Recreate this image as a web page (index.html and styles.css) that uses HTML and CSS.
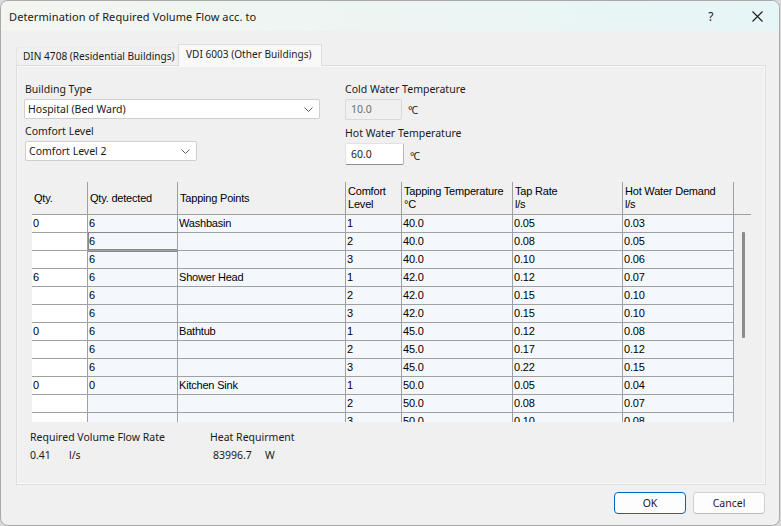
FILE: index.html
```html
<!DOCTYPE html>
<html lang="en">
<head>
    <meta charset="UTF-8">
    <title>Determination of Required Volume Flow</title>
    <link rel="stylesheet" href="styles.css">
</head>
<body>
    <div class="window">
        <div class="titlebar">
            <span class="title">Determination of Required Volume Flow acc. to</span>
            <span class="help">?</span>
            <span class="close">
                <svg width="11" height="11" viewBox="0 0 11 11"><path d="M0.5 0.5 L10.5 10.5 M10.5 0.5 L0.5 10.5" stroke="#1c1c1c" stroke-width="1.1" fill="none"/></svg>
            </span>
        </div>

        <div class="tabs">
            <div class="tab">DIN 4708 (Residential Buildings)</div>
            <div class="tab active">VDI 6003 (Other Buildings)</div>
        </div>

        <div class="panel">
            <div class="form">
                <div class="col col-left">
                    <div class="label">Building Type</div>
                    <div class="combo combo-wide">
                        <span>Hospital (Bed Ward)</span>
                        <svg width="9" height="5" viewBox="0 0 9 5"><path d="M0.5 0.5 L4.5 4.5 L8.5 0.5" stroke="#606060" fill="none"/></svg>
                    </div>
                    <div class="label label-second">Comfort Level</div>
                    <div class="combo combo-narrow">
                        <span>Comfort Level 2</span>
                        <svg width="9" height="5" viewBox="0 0 9 5"><path d="M0.5 0.5 L4.5 4.5 L8.5 0.5" stroke="#606060" fill="none"/></svg>
                    </div>
                </div>
                <div class="col col-right">
                    <div class="label">Cold Water Temperature</div>
                    <div class="temp">
                        <div class="input input-disabled">10.0</div>
                        <span class="unit">°C</span>
                    </div>
                    <div class="label label-third">Hot Water Temperature</div>
                    <div class="temp">
                        <div class="input input-hot">60.0</div>
                        <span class="unit unit-hot">°C</span>
                    </div>
                </div>
            </div>

            <div class="grid">
                <div class="grid-head">
                    <div class="hcell">Qty.</div>
                    <div class="hcell">Qty. detected</div>
                    <div class="hcell">Tapping Points</div>
                    <div class="hcell">Comfort<br>Level</div>
                    <div class="hcell">Tapping Temperature<br>°C</div>
                    <div class="hcell">Tap Rate<br>l/s</div>
                    <div class="hcell">Hot Water Demand<br>l/s</div>
                    <div class="hfill"></div>
                </div>
                <div class="grid-body">
                    <div class="rows">
                        <div class="row"><div class="cell qty">0</div><div class="cell">6</div><div class="cell">Washbasin</div><div class="cell">1</div><div class="cell">40.0</div><div class="cell">0.05</div><div class="cell">0.03</div></div>
                        <div class="row"><div class="cell qty"></div><div class="cell selected">6</div><div class="cell"></div><div class="cell">2</div><div class="cell">40.0</div><div class="cell">0.08</div><div class="cell">0.05</div></div>
                        <div class="row"><div class="cell qty"></div><div class="cell">6</div><div class="cell"></div><div class="cell">3</div><div class="cell">40.0</div><div class="cell">0.10</div><div class="cell">0.06</div></div>
                        <div class="row"><div class="cell qty">6</div><div class="cell">6</div><div class="cell">Shower Head</div><div class="cell">1</div><div class="cell">42.0</div><div class="cell">0.12</div><div class="cell">0.07</div></div>
                        <div class="row"><div class="cell qty"></div><div class="cell">6</div><div class="cell"></div><div class="cell">2</div><div class="cell">42.0</div><div class="cell">0.15</div><div class="cell">0.10</div></div>
                        <div class="row"><div class="cell qty"></div><div class="cell">6</div><div class="cell"></div><div class="cell">3</div><div class="cell">42.0</div><div class="cell">0.15</div><div class="cell">0.10</div></div>
                        <div class="row"><div class="cell qty">0</div><div class="cell">6</div><div class="cell">Bathtub</div><div class="cell">1</div><div class="cell">45.0</div><div class="cell">0.12</div><div class="cell">0.08</div></div>
                        <div class="row"><div class="cell qty"></div><div class="cell">6</div><div class="cell"></div><div class="cell">2</div><div class="cell">45.0</div><div class="cell">0.17</div><div class="cell">0.12</div></div>
                        <div class="row"><div class="cell qty"></div><div class="cell">6</div><div class="cell"></div><div class="cell">3</div><div class="cell">45.0</div><div class="cell">0.22</div><div class="cell">0.15</div></div>
                        <div class="row"><div class="cell qty">0</div><div class="cell">0</div><div class="cell">Kitchen Sink</div><div class="cell">1</div><div class="cell">50.0</div><div class="cell">0.05</div><div class="cell">0.04</div></div>
                        <div class="row"><div class="cell qty"></div><div class="cell"></div><div class="cell"></div><div class="cell">2</div><div class="cell">50.0</div><div class="cell">0.08</div><div class="cell">0.07</div></div>
                        <div class="row"><div class="cell qty"></div><div class="cell"></div><div class="cell"></div><div class="cell">3</div><div class="cell">50.0</div><div class="cell">0.10</div><div class="cell">0.08</div></div>
                    </div>
                    <div class="scrollbar"><div class="thumb"></div></div>
                </div>
            </div>

            <div class="results">
                <div class="result result-flow">
                    <div class="label">Required Volume Flow Rate</div>
                    <div class="value"><span class="num num-flow">0.41</span><span>l/s</span></div>
                </div>
                <div class="result result-heat">
                    <div class="label">Heat Requirment</div>
                    <div class="value"><span class="num num-heat">83996.7</span><span>W</span></div>
                </div>
            </div>
        </div>

        <div class="buttons">
            <button class="btn btn-primary">OK</button>
            <button class="btn">Cancel</button>
        </div>
    </div>
</body>
</html>
```

FILE: styles.css
```css
body {
    margin: 0;
    background-color: #d9d9d9;
    font-family: "Noto Sans", "Open Sans", sans-serif;
    font-size: 10.5px;
    color: #1a1a1a;
}

.window {
    width: 780px;
    height: 526px;
    box-sizing: border-box;
    border: 1px solid #a9a9a9;
    border-radius: 8px;
    background-color: #f0f0f0;
    overflow: hidden;
}

/* title bar */
.titlebar {
    display: flex;
    align-items: center;
    height: 30px;
    padding-left: 8px;
    background: linear-gradient(to right, #f4f5f1, #eef5f2 40%, #e6f5f7);
    font-size: 11px;
    letter-spacing: 0.1px;
}

.title {
    flex: 1;
}

.help {
    width: 24px;
    margin-right: 29px;
    text-align: center;
    font-size: 12px;
}

.close {
    display: flex;
    margin-right: 16px;
}

/* tabs */
.tabs {
    display: flex;
    align-items: flex-end;
    height: 21px;
    margin-top: 13px;
    padding-left: 15px;
    font-size: 10.1px;
}

.tab {
    width: 162px;
    height: 18px;
    box-sizing: border-box;
    line-height: 17px;
    padding-left: 6px;
    white-space: nowrap;
    overflow: hidden;
    border-left: 1px solid #e4e4e4;
    border-top: 1px solid #ececec;
}

.tab.active {
    position: relative;
    width: 144px;
    height: 22px;
    line-height: 18px;
    padding-left: 7px;
    background-color: #f9f9f9;
    border: 1px solid #dcdcdc;
    border-bottom: none;
    margin-bottom: -1px;
}

/* panel */
.panel {
    width: 750px;
    height: 420px;
    box-sizing: border-box;
    margin-left: 15px;
    padding: 15px 0 0 8px;
    border: 1px solid #dcdcdc;
    box-shadow: inset 0 0 0 1px #f9f9f9;
}

.form {
    display: flex;
    align-items: flex-start;
    gap: 25px;
    height: 82px;
}

.col {
    display: flex;
    flex-direction: column;
}

.col-left {
    width: 296px;
    margin-left: -1px;
}

.label {
    height: 16px;
    line-height: 16px;
    white-space: nowrap;
}

.col-left .label {
    padding-left: 1px;
}

.label-second {
    margin-top: 4px;
}

.label-third {
    margin-top: 5px;
}

.combo {
    display: flex;
    align-items: center;
    justify-content: space-between;
    height: 20px;
    box-sizing: border-box;
    margin-top: 2px;
    padding: 0 6px 0 3px;
    background-color: #fff;
    border: 1px solid #cfcfcf;
    border-radius: 2px;
}

.combo-wide {
    width: 296px;
}

.combo-narrow {
    width: 172px;
    margin-left: 1px;
}

.temp {
    display: flex;
    align-items: center;
    margin-top: 2px;
}

.input {
    height: 21px;
    line-height: 19px;
    box-sizing: border-box;
    padding-left: 5px;
    border: 1px solid #d9d9d9;
    border-radius: 2px;
}

.input-disabled {
    width: 57px;
    color: #6d6d6d;
    background-color: #f0f0f0;
}

.input-hot {
    width: 59px;
    height: 22px;
    line-height: 20px;
    background-color: #fff;
    border-color: #e2e2e2 #b8b8b8 #8e8e8e #e2e2e2;
}

.unit {
    margin-left: 6px;
    letter-spacing: -1px;
}

.unit-hot {
    margin-top: 3px;
}

/* data grid */
.grid {
    width: 719px;
    margin: 19px 0 0 7px;
    font-family: "Liberation Sans", Arial, sans-serif;
    font-size: 11px;
    letter-spacing: -0.2px;
    color: #000;
}

.grid-head,
.row {
    display: grid;
    grid-template-columns: 56px 90px 168px 56px 111px 110px 111px;
}

.grid-head {
    grid-template-columns: 56px 90px 168px 56px 111px 110px 111px 17px;
    height: 33px;
    box-sizing: border-box;
    border-bottom: 1px solid #a0a0a0;
}

.hcell {
    display: flex;
    align-items: center;
    padding-left: 2px;
    line-height: 13px;
    border-right: 1px solid #a0a0a0;
}

.grid-body {
    display: flex;
    height: 207px;
    overflow: hidden;
}

.rows {
    width: 702px;
}

.cell {
    height: 17px;
    line-height: 17px;
    padding-left: 1px;
    background-color: #f4f8fd;
    border-right: 1px solid #a0a0a0;
    border-bottom: 1px solid #a0a0a0;
    white-space: nowrap;
}

.cell.qty {
    background-color: #fff;
}

.cell.selected {
    box-shadow: inset 1px 0 0 #8a8a8a, inset 0 -1px 0 #8a8a8a, 0 1px 0 #8a8a8a, 0 -1px 0 #8a8a8a;
    position: relative;
}

.scrollbar {
    width: 17px;
    padding: 17px 0 0 8px;
    box-sizing: border-box;
}

.thumb {
    width: 3px;
    height: 106px;
    background-color: #8b8b8b;
    border-radius: 1px;
}

/* results */
.results {
    display: flex;
    margin-top: 7px;
    padding-left: 5px;
}

.result-flow {
    width: 180px;
}

.value {
    margin-top: 2px;
    height: 16px;
    line-height: 16px;
}

.num {
    display: inline-block;
}

.num-flow {
    width: 39px;
}

.num-heat {
    width: 52px;
    margin-left: 3px;
}

/* buttons */
.buttons {
    display: flex;
    justify-content: flex-end;
    gap: 7px;
    margin-top: 7px;
    padding-right: 14px;
}

.btn {
    width: 72px;
    height: 22px;
    padding: 0;
    font-family: "Noto Sans", "Open Sans", sans-serif;
    font-size: 10.5px;
    color: #1a1a1a;
    background-color: #fdfdfd;
    border: 1px solid #d0d0d0;
    border-bottom-color: #bababa;
    border-radius: 4px;
}

.btn-primary {
    border: 1px solid #0067c0;
}
```
